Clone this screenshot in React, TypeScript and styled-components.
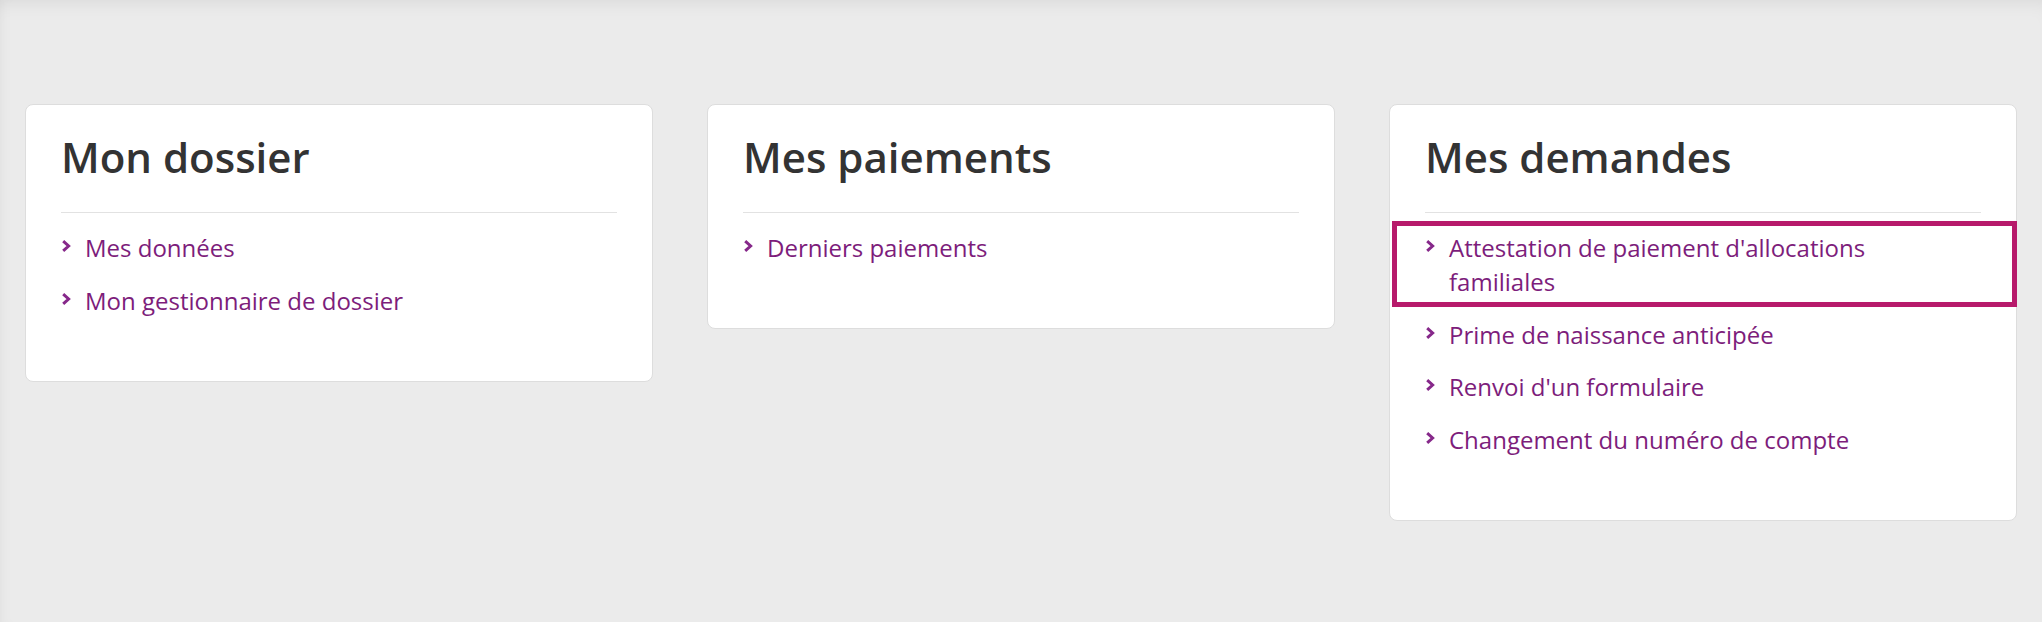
import React from "react";
import styled, { createGlobalStyle } from "styled-components";

const Colors = {
  page: "#ebebeb",
  card: "#ffffff",
  border: "#dddddd",
  title: "#333333",
  link: "#7d1d7b",
  chevron: "#86288a",
  focus: "#b71a6b",
  divider: "#e2e2e2",
};

const GlobalStyle = createGlobalStyle`
  html, body {
    margin: 0;
    padding: 0;
    background: ${Colors.page};
    font-family: "Open Sans", "Noto Sans", sans-serif;
  }
`;

const Page = styled.div`
  min-height: 622px;
  box-sizing: border-box;
  padding: 104px 25px 0;
  background: ${Colors.page};
  box-shadow: inset 0 14px 18px -12px rgba(0, 0, 0, 0.08),
    inset 10px 0 14px -10px rgba(0, 0, 0, 0.05);
`;

const Grid = styled.div`
  display: grid;
  grid-template-columns: repeat(3, 1fr);
  gap: 54px;
  align-items: start;
`;

const Card = styled.section`
  background: ${Colors.card};
  border: 1px solid ${Colors.border};
  border-radius: 8px;
  padding: 28px 35px 63px;
`;

const Title = styled.h2`
  margin: 0;
  font-size: 42px;
  line-height: 48px;
  font-weight: 600;
  color: ${Colors.title};
  padding-bottom: 31px;
  border-bottom: 1px solid ${Colors.divider};
`;

const List = styled.ul`
  list-style: none;
  margin: 0;
  padding: 18px 0 0;
  display: flex;
  flex-direction: column;
  gap: 18.5px;
`;

const Item = styled.li<{ $focused?: boolean }>`
  position: relative;
  display: flex;
  align-items: flex-start;
  font-size: 24px;
  line-height: 34px;
  color: ${Colors.link};

  ${({ $focused }) =>
    $focused &&
    `
    &::after {
      content: "";
      position: absolute;
      top: -10px;
      bottom: -8px;
      left: -33px;
      right: -36px;
      border: 5px solid ${Colors.focus};
      pointer-events: none;
    }
  `}
`;

const Chevron = styled.svg`
  flex: none;
  width: 10px;
  height: 12px;
  margin: 9px 14px 0 0;
`;

const Link = styled.a`
  color: inherit;
  text-decoration: none;
  padding-right: 12px;
`;

interface CardData {
  title: string;
  links: { label: string; focused?: boolean }[];
}

const cards: CardData[] = [
  {
    title: "Mon dossier",
    links: [{ label: "Mes données" }, { label: "Mon gestionnaire de dossier" }],
  },
  {
    title: "Mes paiements",
    links: [{ label: "Derniers paiements" }],
  },
  {
    title: "Mes demandes",
    links: [
      { label: "Attestation de paiement d'allocations familiales", focused: true },
      { label: "Prime de naissance anticipée" },
      { label: "Renvoi d'un formulaire" },
      { label: "Changement du numéro de compte" },
    ],
  },
];

const ChevronIcon = () => (
  <Chevron viewBox="0 0 10 12" aria-hidden="true">
    <path
      d="M2.2 1.2 L7.6 6 L2.2 10.8"
      fill="none"
      stroke={Colors.chevron}
      strokeWidth="3"
      strokeLinejoin="miter"
    />
  </Chevron>
);

const App = (): JSX.Element => {
  return (
    <Page>
      <GlobalStyle />
      <Grid>
        {cards.map((card) => (
          <Card key={card.title}>
            <Title>{card.title}</Title>
            <List>
              {card.links.map((link) => (
                <Item key={link.label} $focused={link.focused}>
                  <ChevronIcon />
                  <Link href="#">{link.label}</Link>
                </Item>
              ))}
            </List>
          </Card>
        ))}
      </Grid>
    </Page>
  );
};

export default App;
